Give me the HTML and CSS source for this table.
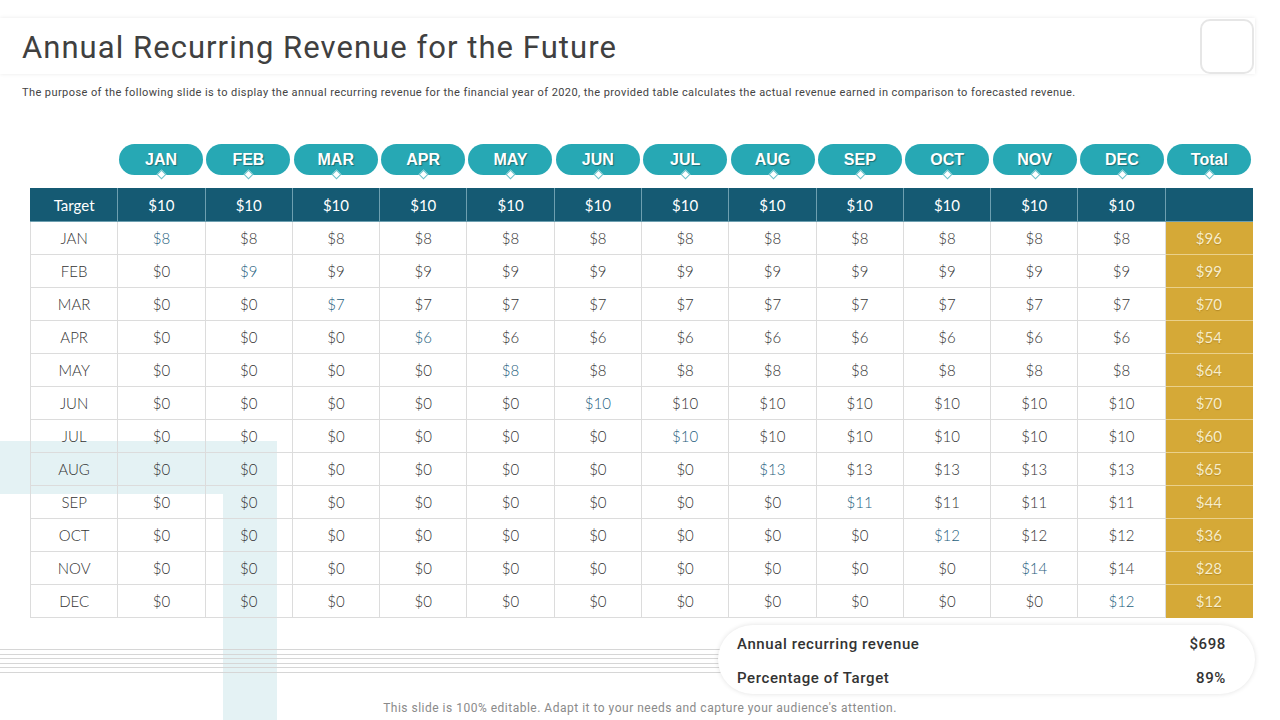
FILE: index.html
```html
<!DOCTYPE html>
<html lang="en">
<head>
<meta charset="utf-8">
<title>Annual Recurring Revenue for the Future</title>
<link rel="stylesheet" href="styles.css">
</head>
<body>
<div class="slide">
  <div class="decor decor-h"></div>
  <div class="decor decor-v"></div>
  <div class="decor decor-lines"><span></span><span></span><span></span><span></span><span></span><span></span></div>

  <div class="content">
    <header class="titlebar">
      <h1 class="title">Annual Recurring Revenue for the Future</h1>
      <div class="corner-box"></div>
    </header>
    <p class="subtitle">The purpose of the following slide is to display the annual recurring revenue for the financial year of 2020, the provided table calculates the actual revenue earned in comparison to forecasted revenue.</p>

    <div class="pills">
      <div class="pill-spacer"></div>
      <div class="pill">JAN</div>
      <div class="pill">FEB</div>
      <div class="pill">MAR</div>
      <div class="pill">APR</div>
      <div class="pill">MAY</div>
      <div class="pill">JUN</div>
      <div class="pill">JUL</div>
      <div class="pill">AUG</div>
      <div class="pill">SEP</div>
      <div class="pill">OCT</div>
      <div class="pill">NOV</div>
      <div class="pill">DEC</div>
      <div class="pill">Total</div>
    </div>

    <table class="grid">
      <thead>
        <tr><th>Target</th><th>$10</th><th>$10</th><th>$10</th><th>$10</th><th>$10</th><th>$10</th><th>$10</th><th>$10</th><th>$10</th><th>$10</th><th>$10</th><th>$10</th><th class="th-total"></th></tr>
      </thead>
      <tbody>
        <tr><td>JAN</td><td class="hl">$8</td><td>$8</td><td>$8</td><td>$8</td><td>$8</td><td>$8</td><td>$8</td><td>$8</td><td>$8</td><td>$8</td><td>$8</td><td>$8</td><td class="total">$96</td></tr>
        <tr><td>FEB</td><td>$0</td><td class="hl">$9</td><td>$9</td><td>$9</td><td>$9</td><td>$9</td><td>$9</td><td>$9</td><td>$9</td><td>$9</td><td>$9</td><td>$9</td><td class="total">$99</td></tr>
        <tr><td>MAR</td><td>$0</td><td>$0</td><td class="hl">$7</td><td>$7</td><td>$7</td><td>$7</td><td>$7</td><td>$7</td><td>$7</td><td>$7</td><td>$7</td><td>$7</td><td class="total">$70</td></tr>
        <tr><td>APR</td><td>$0</td><td>$0</td><td>$0</td><td class="hl">$6</td><td>$6</td><td>$6</td><td>$6</td><td>$6</td><td>$6</td><td>$6</td><td>$6</td><td>$6</td><td class="total">$54</td></tr>
        <tr><td>MAY</td><td>$0</td><td>$0</td><td>$0</td><td>$0</td><td class="hl">$8</td><td>$8</td><td>$8</td><td>$8</td><td>$8</td><td>$8</td><td>$8</td><td>$8</td><td class="total">$64</td></tr>
        <tr><td>JUN</td><td>$0</td><td>$0</td><td>$0</td><td>$0</td><td>$0</td><td class="hl">$10</td><td>$10</td><td>$10</td><td>$10</td><td>$10</td><td>$10</td><td>$10</td><td class="total">$70</td></tr>
        <tr><td>JUL</td><td>$0</td><td>$0</td><td>$0</td><td>$0</td><td>$0</td><td>$0</td><td class="hl">$10</td><td>$10</td><td>$10</td><td>$10</td><td>$10</td><td>$10</td><td class="total">$60</td></tr>
        <tr><td>AUG</td><td>$0</td><td>$0</td><td>$0</td><td>$0</td><td>$0</td><td>$0</td><td>$0</td><td class="hl">$13</td><td>$13</td><td>$13</td><td>$13</td><td>$13</td><td class="total">$65</td></tr>
        <tr><td>SEP</td><td>$0</td><td>$0</td><td>$0</td><td>$0</td><td>$0</td><td>$0</td><td>$0</td><td>$0</td><td class="hl">$11</td><td>$11</td><td>$11</td><td>$11</td><td class="total">$44</td></tr>
        <tr><td>OCT</td><td>$0</td><td>$0</td><td>$0</td><td>$0</td><td>$0</td><td>$0</td><td>$0</td><td>$0</td><td>$0</td><td class="hl">$12</td><td>$12</td><td>$12</td><td class="total">$36</td></tr>
        <tr><td>NOV</td><td>$0</td><td>$0</td><td>$0</td><td>$0</td><td>$0</td><td>$0</td><td>$0</td><td>$0</td><td>$0</td><td>$0</td><td class="hl">$14</td><td>$14</td><td class="total">$28</td></tr>
        <tr><td>DEC</td><td>$0</td><td>$0</td><td>$0</td><td>$0</td><td>$0</td><td>$0</td><td>$0</td><td>$0</td><td>$0</td><td>$0</td><td>$0</td><td class="hl">$12</td><td class="total">$12</td></tr>
      </tbody>
    </table>

    <div class="summary">
      <div class="summary-row"><span>Annual recurring revenue</span><span>$698</span></div>
      <div class="summary-row"><span>Percentage of Target</span><span>89%</span></div>
    </div>

    <p class="footer">This slide is 100% editable. Adapt it to your needs and capture your audience's attention.</p>
  </div>
</div>
</body>
</html>
```

FILE: styles.css
```css
html, body {
  margin: 0;
  padding: 0;
  background: #ffffff;
}

.slide {
  position: relative;
  width: 1280px;
  height: 720px;
  overflow: hidden;
  background: #ffffff;
  font-family: "Lato", "Open Sans", sans-serif;
}

.decor {
  position: absolute;
}

.decor-h {
  left: 0;
  top: 441px;
  width: 277px;
  height: 53px;
  background: #e4f2f4;
}

.decor-v {
  left: 223px;
  top: 441px;
  width: 54px;
  height: 279px;
  background: #e4f2f4;
}

.decor-lines {
  left: 0;
  top: 649px;
  width: 722px;
  display: flex;
  flex-direction: column;
  gap: 3.5px;
}

.decor-lines span {
  display: block;
  height: 1px;
  background: #d6d6d6;
}

.content {
  position: relative;
  z-index: 1;
  display: flex;
  flex-direction: column;
}

.titlebar {
  margin-top: 18px;
  width: 1255px;
  height: 56px;
  box-sizing: border-box;
  background: #ffffff;
  box-shadow: 0 0 4px rgba(0, 0, 0, 0.09);
  display: flex;
  align-items: center;
  justify-content: space-between;
}

.title {
  margin: 0 0 0 22px;
  font-family: "Roboto", "DejaVu Sans", sans-serif;
  font-weight: 400;
  font-size: 31px;
  letter-spacing: 1.05px;
  color: #404040;
  line-height: 1;
  position: relative;
  top: 1px;
}

.corner-box {
  width: 50px;
  height: 51px;
  border: 2px solid #e6e6e6;
  border-radius: 10px;
  background: #ffffff;
  margin-right: 1px;
}

.subtitle {
  margin: 12px 0 0 22px;
  font-family: "Roboto", sans-serif;
  font-size: 11px;
  line-height: 14px;
  color: #444444;
  letter-spacing: 0.42px;
}

.pills {
  margin: 44px 0 0 30px;
  width: 1223px;
  display: grid;
  grid-template-columns: repeat(14, 1fr);
}

.pill {
  position: relative;
  justify-self: center;
  width: 84px;
  height: 31px;
  border-radius: 16px;
  background: #27a8b4;
  color: #ffffff;
  font-family: "Liberation Sans", Arial, sans-serif;
  font-weight: 700;
  font-size: 16px;
  line-height: 31px;
  text-align: center;
  text-shadow: 1px 1px 1px rgba(0, 0, 0, 0.35);
}

.pill::after {
  content: "";
  position: absolute;
  left: 50%;
  bottom: -3px;
  width: 5px;
  height: 5px;
  margin-left: -3px;
  background: #ffffff;
  border: 1px solid #6cc2ca;
  transform: rotate(45deg);
}

.grid {
  margin: 13px 0 0 30px;
  width: 1223px;
  table-layout: fixed;
  border-collapse: collapse;
  background: transparent;
}

.grid th,
.grid td {
  height: 33px;
  padding: 0;
  text-align: center;
  font-size: 15px;
  font-weight: 300;
  box-sizing: border-box;
}

.grid th {
  background: #155a73;
  color: #ffffff;
  font-weight: 400;
  border: 1px solid #6d9fb0;
  border-top-color: #155a73;
}

.grid th:first-child {
  border-left-color: #155a73;
}

.grid th.th-total {
  border-right-color: #155a73;
}

.grid td {
  color: #333333;
  border: 1px solid #dcdcdc;
}

.grid td.hl {
  color: #1f5f80;
}

.grid td.total {
  background: #d5a937;
  color: #f8edc9;
  font-weight: 400;
  border: 1px solid #ead08a;
  border-right-color: #d5a937;
  text-shadow: 0 1px 1px rgba(120, 80, 0, 0.35);
}

.grid tbody tr:last-child td.total {
  border-bottom-color: #d5a937;
}

.summary {
  align-self: flex-end;
  margin: 7px 25px 0 0;
  width: 537px;
  height: 69px;
  box-sizing: border-box;
  padding: 2px 29px 0 19px;
  background: #ffffff;
  border-radius: 35px;
  box-shadow: 0 0 5px rgba(0, 0, 0, 0.12);
  display: flex;
  flex-direction: column;
  justify-content: center;
  gap: 14px;
}

.summary-row {
  display: flex;
  justify-content: space-between;
  font-family: "Roboto", sans-serif;
  font-weight: 500;
  font-size: 15px;
  line-height: 20px;
  color: #333333;
  letter-spacing: 0.6px;
}

.footer {
  margin: 7px 0 0 0;
  text-align: center;
  font-family: "Roboto", sans-serif;
  font-size: 12px;
  line-height: 14px;
  color: #8a8a8a;
  letter-spacing: 0.5px;
}
```
